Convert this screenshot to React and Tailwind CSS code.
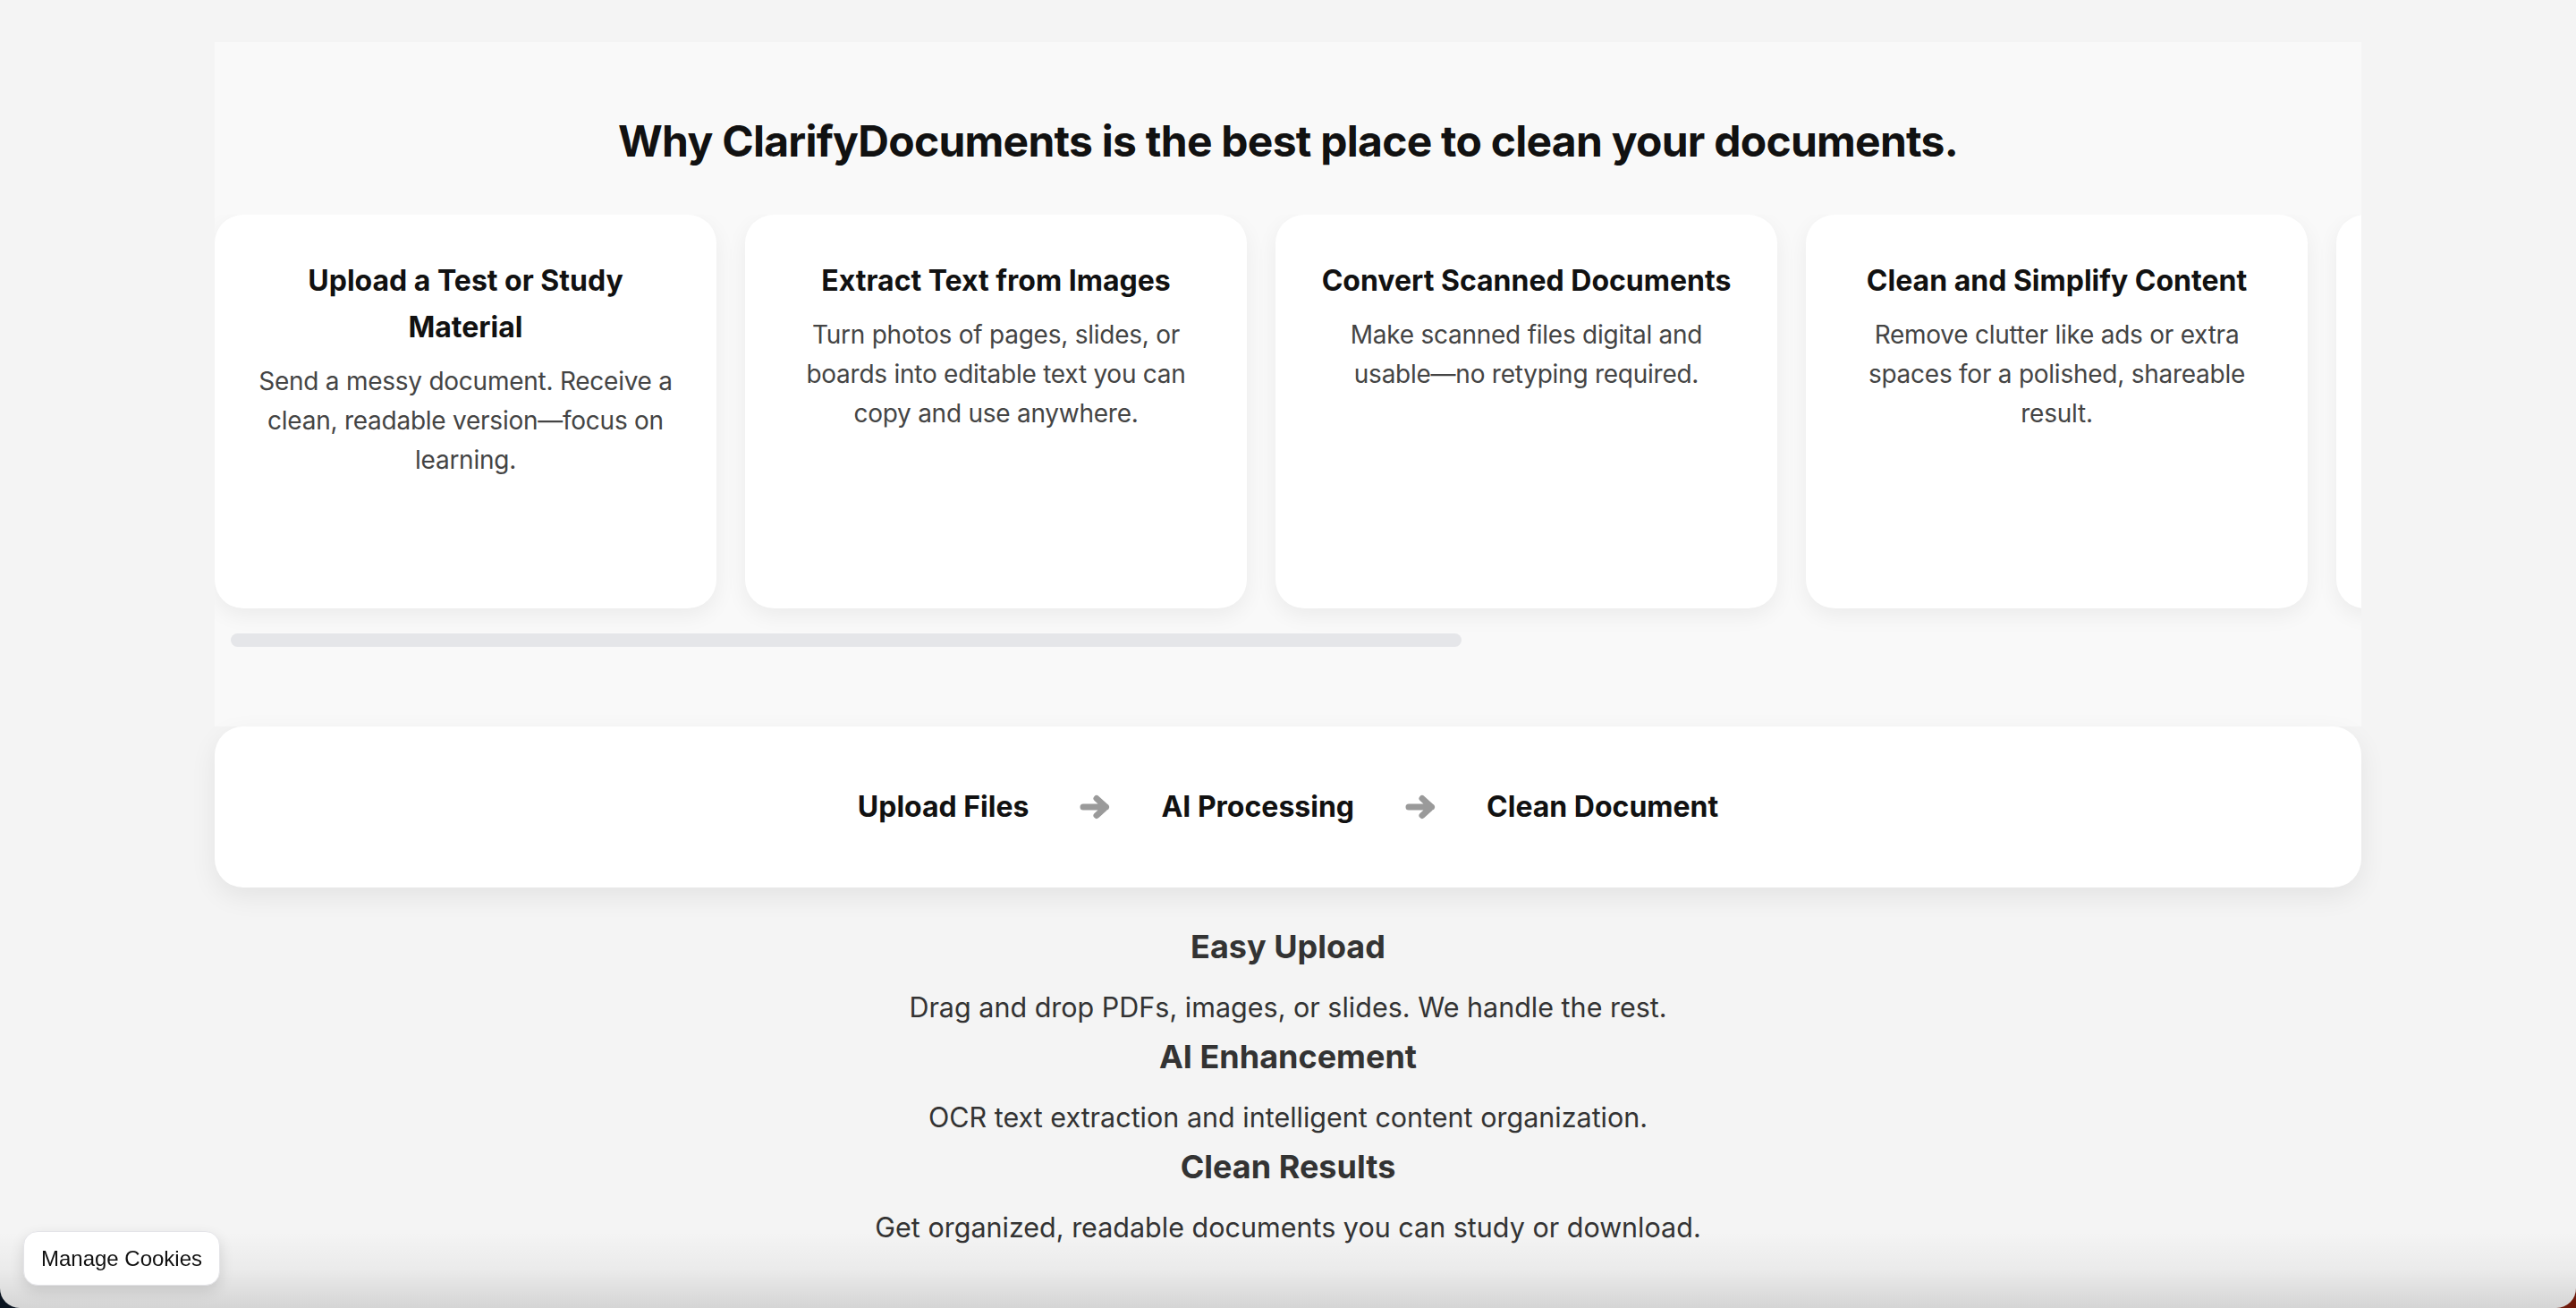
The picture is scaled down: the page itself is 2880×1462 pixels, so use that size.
import React from "react";

const cards = [
  {
    title: "Upload a Test or Study Material",
    desc: "Send a messy document. Receive a clean, readable version—focus on learning.",
  },
  {
    title: "Extract Text from Images",
    desc: "Turn photos of pages, slides, or boards into editable text you can copy and use anywhere.",
  },
  {
    title: "Convert Scanned Documents",
    desc: "Make scanned files digital and usable—no retyping required.",
  },
  {
    title: "Clean and Simplify Content",
    desc: "Remove clutter like ads or extra spaces for a polished, shareable result.",
  },
  {
    title: "Share and Download",
    desc: "Export your cleaned documents as PDF or text in seconds.",
  },
  {
    title: "Study Smarter",
    desc: "Spend less time fixing formatting and more time learning.",
  },
];

const features = [
  { title: "Easy Upload", desc: "Drag and drop PDFs, images, or slides. We handle the rest." },
  { title: "AI Enhancement", desc: "OCR text extraction and intelligent content organization." },
  { title: "Clean Results", desc: "Get organized, readable documents you can study or download." },
];

function Arrow() {
  return (
    <svg width="34" height="28" viewBox="0 0 34 28" fill="none" className="shrink-0">
      <path
        d="M4 14H29.5M19 4.5L29.5 14L19 23.5"
        stroke="#9a9a9a"
        strokeWidth="7"
        strokeLinecap="round"
        strokeLinejoin="round"
      />
    </svg>
  );
}

export default function App() {
  return (
    <div className="min-h-screen bg-[linear-gradient(90deg,#0a1420_0%,#0a1420_50%,#6e1a0b_50%,#6e1a0b_100%)] font-['Inter','Noto_Sans',sans-serif]">
      <div className="relative min-h-screen overflow-hidden rounded-b-[22px] bg-[#f4f4f4] pt-[47px]">
        <section className="mx-[240px] bg-[#f9f9f9] pt-[82px] pb-[89px]">
          <h2 className="mb-[53px] text-center text-[48px] font-bold leading-[58px] tracking-[-0.75px] text-[#111]">
            Why ClarifyDocuments is the best place to clean your documents.
          </h2>
          <div className="flex gap-[32px] overflow-hidden pb-[28px]">
            {cards.map((c) => (
              <div
                key={c.title}
                className="h-[440px] w-[561px] shrink-0 rounded-[32px] bg-white px-[44px] pt-[48px] text-center shadow-[0_8px_24px_rgba(0,0,0,0.06)]"
              >
                <h3 className="text-[32px] font-bold leading-[52px] text-[#111]">{c.title}</h3>
                <p className="mt-[12px] text-[28px] leading-[44px] tracking-[-0.25px] text-[#444]">{c.desc}</p>
              </div>
            ))}
          </div>
          <div className="ml-[18px] h-[15px] w-[1376px] rounded-full bg-[#e5e6e9]" />
        </section>

        <div className="mx-[240px] flex h-[180px] items-center justify-center gap-[57px] rounded-[32px] bg-white shadow-[0_10px_30px_rgba(0,0,0,0.07)]">
          <span className="text-[32px] font-bold text-[#111]">Upload Files</span>
          <Arrow />
          <span className="text-[32px] font-bold text-[#111]">AI Processing</span>
          <Arrow />
          <span className="text-[32px] font-bold text-[#111]">Clean Document</span>
        </div>

        <div className="mt-[36px] text-center">
          {features.map((f) => (
            <div key={f.title}>
              <h3 className="mb-[13px] text-[36px] font-bold leading-[60px] text-[#333]">{f.title}</h3>
              <p className="text-[30.5px] leading-[50px] text-[#333]">{f.desc}</p>
            </div>
          ))}
        </div>

        <div className="pointer-events-none absolute inset-x-0 bottom-0 h-[85px] bg-[linear-gradient(180deg,rgba(0,0,0,0)_0%,rgba(0,0,0,0.04)_50%,rgba(0,0,0,0.13)_100%)]" />

        <button className="fixed bottom-[25px] left-[26px] flex h-[61px] w-[220px] items-center justify-center rounded-[16px] border border-[#e4e4e8] bg-white font-['Liberation_Sans',Arial,sans-serif] text-[24px] text-[#111] shadow-[0_6px_16px_rgba(0,0,0,0.12)]">
          Manage Cookies
        </button>
      </div>
    </div>
  );
}
